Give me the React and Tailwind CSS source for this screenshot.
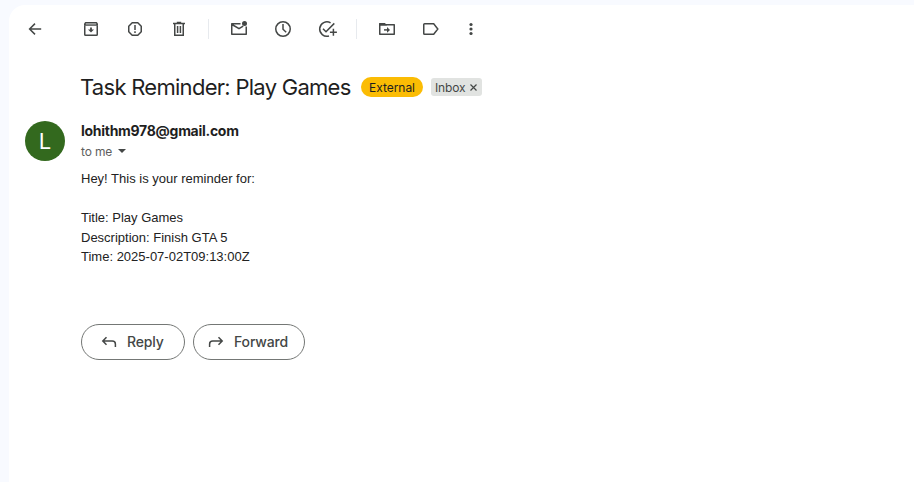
import React from "react";

const sans = "font-['Inter','Liberation_Sans',sans-serif]";

function Icon({ children, label }) {
  return (
    <svg
      aria-label={label}
      width="20"
      height="20"
      viewBox="0 0 20 20"
      fill="none"
      stroke="#444746"
      strokeWidth="1.5"
      className="block shrink-0 overflow-visible"
    >
      {children}
    </svg>
  );
}

function Divider() {
  return <div className="h-5 w-px shrink-0 bg-[#e7eaee]" />;
}

function Toolbar() {
  return (
    <div className="flex h-12 items-center pl-4">
      <Icon label="Back">
        <path d="M16.2 10H5M10 4.6L4.6 10L10 15.4" />
      </Icon>
      <div className="ml-9 flex gap-6">
        <Icon label="Archive">
          <path d="M3.75 6.5V15.5Q3.75 16.25 4.5 16.25H15.5Q16.25 16.25 16.25 15.5V6.5" />
          <path d="M3 6.8V4.5L4.3 3H15.7L17 4.5V6.8Z" fill="#444746" stroke="none" />
          <path d="M4.8 4.9H15.2" stroke="#a3a5a4" strokeWidth="1.6" />
          <path d="M10 8.5V11" strokeWidth="1.8" />
          <path d="M7 10.4H13L10 13.6Z" fill="#444746" stroke="none" />
        </Icon>
        <Icon label="Report spam">
          <path d="M7.2 3.75H12.8L16.25 7.2V12.8L12.8 16.25H7.2L3.75 12.8V7.2Z" strokeLinejoin="round" />
          <path d="M10 6V11M10 12.3V14" />
        </Icon>
        <Icon label="Delete">
          <path d="M4 4.5H16M7.8 3.5H12.2M5.75 4.5V16.25H14.25V4.5M8.6 7V14M11.4 7V14" />
        </Icon>
      </div>
      <div className="ml-[19px] mr-5">
        <Divider />
      </div>
      <div className="flex gap-6">
        <Icon label="Mark as unread">
          <path d="M11.5 4.75H2.75V15.25H17.25V7.5M3 5.5L10 9.7L14.2 7.2" strokeLinejoin="round" />
          <circle cx="15.5" cy="4.5" r="2.5" fill="#444746" stroke="none" />
        </Icon>
        <Icon label="Snooze">
          <circle cx="10" cy="10" r="7.25" />
          <path d="M10 5V10.2L13.2 13.2" />
        </Icon>
        <Icon label="Add to tasks">
          <path d="M13.6 3.8A7.25 7.25 0 1 0 12 17M6 9.7L9 12.7L17.3 4.4M16.4 9.8V16.8M12.9 13.3H19.9" />
        </Icon>
      </div>
      <div className="ml-[19px] mr-5">
        <Divider />
      </div>
      <div className="flex gap-6">
        <Icon label="Move to">
          <path d="M2.75 5V15.25H17.25V5.75H2.75Z" strokeLinejoin="round" />
          <path d="M2 6.4V4.5L2.6 4H8L10 6.4H2Z" fill="#444746" stroke="none" />
          <path d="M7 10.9H12" />
          <path d="M10 8L13 10.9L10 13.8Z" fill="#444746" stroke="none" />
        </Icon>
        <Icon label="Labels">
          <path d="M3.6 4.75H12.7L16.8 10L12.7 15.25H3.6Q2.75 15.25 2.75 14.4V5.6Q2.75 4.75 3.6 4.75Z" />
        </Icon>
      </div>
      <div className="ml-5">
        <Icon label="More">
          <g fill="#444746" stroke="none">
            <circle cx="10" cy="5.5" r="1.6" />
            <circle cx="10" cy="10" r="1.6" />
            <circle cx="10" cy="14.5" r="1.6" />
          </g>
        </Icon>
      </div>
    </div>
  );
}

function ActionButton({ children, className }) {
  return (
    <button
      className={`flex h-9 items-center rounded-full border border-[#747775] text-sm font-medium tracking-[-0.15px] text-[#444746] ${className}`}
    >
      {children}
    </button>
  );
}

export default function App() {
  return (
    <div className={`flex h-[482px] w-[914px] overflow-hidden bg-[#f8faff] pl-[9px] pt-[5px] ${sans}`}>
      <main className="flex-1 rounded-tl-2xl bg-white">
        <Toolbar />
        <header className="flex h-[58px] items-center pl-[72px] pt-[10px]">
          <h1 className="-ml-px mr-px w-[270px] whitespace-nowrap text-[22px] leading-7 tracking-[-0.72px] text-[#1f1f1f]">
            Task Reminder: Play Games
          </h1>
          <span className="ml-[10px] flex h-5 w-[62px] items-center justify-center rounded-full bg-[#fbbc04] pt-px text-xs tracking-[-0.05px] text-[#1f1f1f]">
            External
          </span>
          <span className="ml-2 flex h-[18px] w-[51px] items-center rounded-[3px] bg-[#e1e3e1] pl-1 pt-px text-xs text-[#444746]">
            <span className="w-[30px] tracking-[-0.15px]">Inbox</span>
            <svg width="7" height="7" viewBox="0 0 7 7" className="ml-[5px]" stroke="#444746" strokeWidth="1.2">
              <path d="M.5.5L6.5 6.5M6.5.5L.5 6.5" />
            </svg>
          </span>
        </header>
        <section className="flex pl-4 pt-[5px]">
          <div className="mt-[5px] flex size-10 items-center justify-center rounded-full bg-[#33691e] pt-px text-[22px] text-white">
            L
          </div>
          <div className="ml-4">
            <div className="mt-1 h-5 text-sm font-bold leading-[22px] tracking-[-0.28px] text-[#1f1f1f]">
              lohithm978@gmail.com
            </div>
            <div className="mt-px flex h-5 items-center pt-0.5 text-xs tracking-[-0.15px] text-[#5e5e5e]">
              to me
              <svg width="8" height="4" viewBox="0 0 8 4" fill="#444746" className="ml-[6px] -mt-0.5">
                <path d="M0 0H8L4 4Z" />
              </svg>
            </div>
            <div className="mt-2 font-['Liberation_Sans',Arial,sans-serif] text-[13px] leading-[19.5px] text-[#222222]">
              <p>Hey! This is your reminder for:</p>
              <p className="mt-[19.5px]">Title: Play Games</p>
              <p>Description: Finish GTA 5</p>
              <p>Time: 2025-07-02T09:13:00Z</p>
            </div>
            <div className="mt-[57px] flex gap-2">
              <ActionButton className="w-[104px] pl-[17px]">
                <Icon label="Reply arrow">
                  <path d="M7.5 5.2L3.8 9L7.5 12.8M4 9H13.2Q16.4 9 16.4 12V15" />
                </Icon>
                <span className="ml-2">Reply</span>
              </ActionButton>
              <ActionButton className="w-28 pl-3">
                <Icon label="Forward arrow">
                  <path d="M12.5 5.2L16.2 9L12.5 12.8M16 9H6.8Q3.6 9 3.6 12V15" />
                </Icon>
                <span className="ml-2">Forward</span>
              </ActionButton>
            </div>
          </div>
        </section>
      </main>
    </div>
  );
}
